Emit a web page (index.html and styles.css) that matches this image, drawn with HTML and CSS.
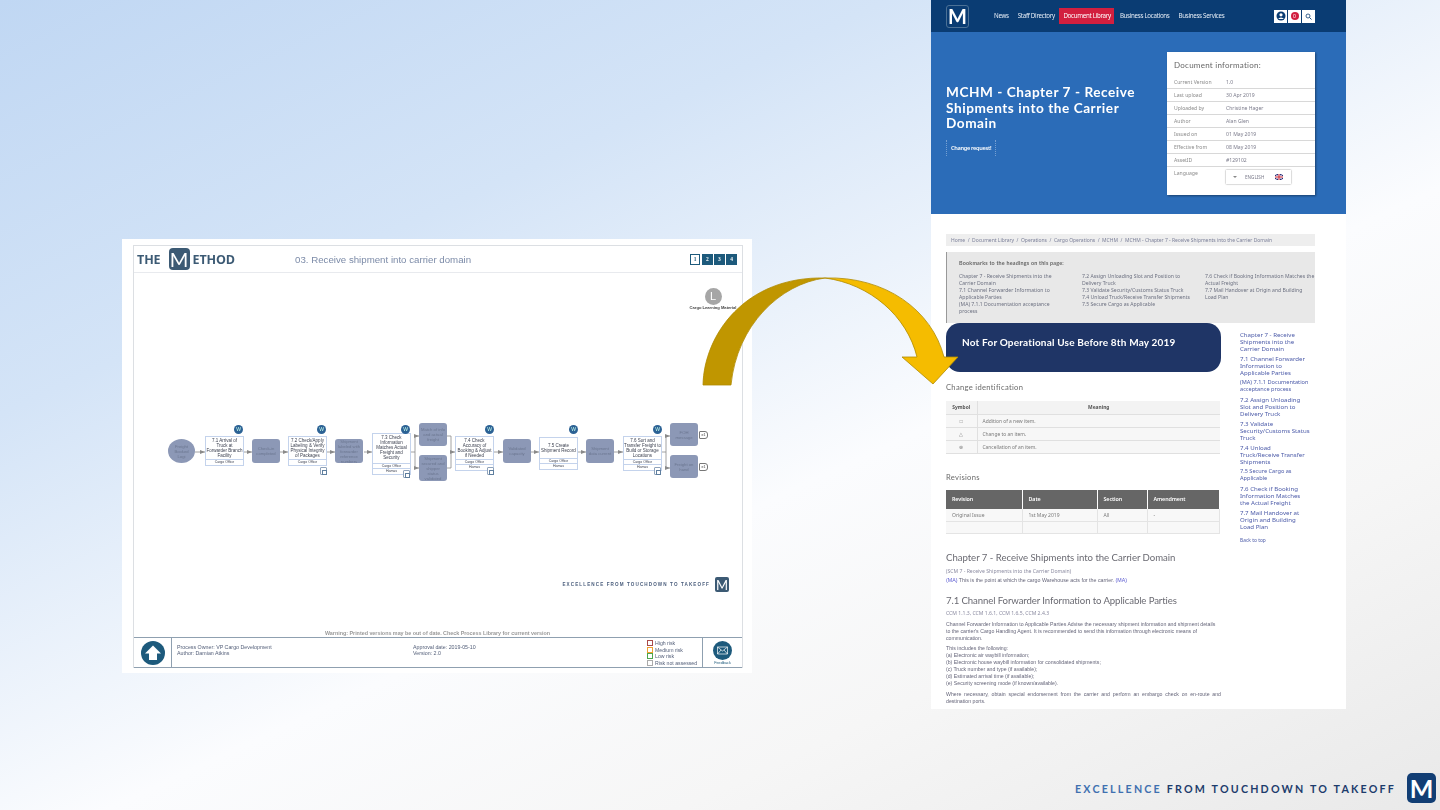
FILE: index.html
```html
<!DOCTYPE html>
<html lang="en">
<head>
<meta charset="utf-8">
<title>The Method - Document Library</title>
<link rel="stylesheet" href="styles.css">
</head>
<body>
<main class="slide">

<section class="method">
  <div class="frame">
    <header class="m-head">
      <span class="m-the">THE</span>
      <span class="m-logo">M</span>
      <span class="m-ethod">ETHOD</span>
      <span class="m-title">03. Receive shipment into carrier domain</span>
      <span class="m-pages"><b class="pg on">1</b><b class="pg">2</b><b class="pg">3</b><b class="pg">4</b></span>
    </header>
    <div class="m-canvas">
      <svg class="edges" width="610" height="364" viewBox="133 272 610 364">
        <g fill="none" stroke="#8a8a8a" stroke-width="0.8">
          <path d="M195 451H205M244 451H252M280 451H288M327 451H335M364 451H372M411 451H415M415 435H419M415 467H419M415 435V467M447 435H451M447 467H451M451 435V467M451 451H455M494 451H503M531 451H539M578 451H586M614 451H623M662 451H666M666 435V467M666 435H670M666 467H670"/>
        </g>
        <g fill="#8a8a8a">
          <path d="M205 451l-5-2v4zM252 451l-5-2v4zM288 451l-5-2v4zM335 451l-5-2v4zM372 451l-5-2v4zM419 435l-5-2v4zM419 467l-5-2v4zM455 451l-5-2v4zM503 451l-5-2v4zM539 451l-5-2v4zM586 451l-5-2v4zM623 451l-5-2v4zM670 435l-5-2v4zM670 467l-5-2v4z"/>
        </g>
      </svg>

      <div class="node oval s1">Freight Booked Logi</div>
      <div class="box b1"><p class="bt">7.1 Arrival of Truck at Forwarder Branch Facility</p><p class="br">Cargo Office</p></div>
      <div class="node s2">Check-in completed</div>
      <div class="box b2"><p class="bt">7.2 Check/Apply Labeling &amp; Verify Physical Integrity of Packages</p><p class="br">Cargo Office</p></div>
      <div class="node s3">Shipment labeled with forwarder reference numbers</div>
      <div class="box b3"><p class="bt">7.3 Check Information Matches Actual Freight and Security</p><p class="br">Cargo Office</p><p class="br">Hamas</p></div>
      <div class="node s4">Match of info and actual freight</div>
      <div class="node s5">Shipment secured and shipper status validated</div>
      <div class="box b4"><p class="bt">7.4 Check Accuracy of Booking &amp; Adjust if Needed</p><p class="br">Cargo Office</p><p class="br">Hamas</p></div>
      <div class="node s6">Validated capacity</div>
      <div class="box b5"><p class="bt mid">7.5 Create Shipment Record</p><p class="br">Cargo Office</p><p class="br">Hamas</p></div>
      <div class="node s7">Shipment data current</div>
      <div class="box b6"><p class="bt">7.6 Sort and Transfer Freight to Build or Storage Locations</p><p class="br">Cargo Office</p><p class="br">Hamas</p></div>
      <div class="node s8">FOH message</div>
      <div class="node s9">Freight on hand</div>

      <span class="w w1">W</span><span class="w w2">W</span><span class="w w3">W</span>
      <span class="w w4">W</span><span class="w w5">W</span><span class="w w6">W</span>

      <span class="doc d1"></span><span class="doc d2"></span><span class="doc d3"></span><span class="doc d4"></span>
      <span class="tag t1">e1</span><span class="tag t2">e1</span>

      <div class="learn"><span class="learn-dot">L</span><span class="learn-txt">Cargo Learning Material</span></div>
      <div class="m-tagline"><span>EXCELLENCE FROM TOUCHDOWN TO TAKEOFF</span><span class="m-logo small">M</span></div>
      <p class="warn">Warning: Printed versions may be out of date. Check Process Library for current version</p>
    </div>
    <footer class="m-foot">
      <div class="up-cell">
        <svg width="24" height="24" viewBox="0 0 24 24"><circle cx="12" cy="12" r="12" fill="#1d5a7c"/><path d="M12 4.5L20 12.5H16V19H8V12.5H4Z" fill="#fff"/></svg>
      </div>
      <div class="owner"><p>Process Owner: VP Cargo Development</p><p>Author: Damian Atkins</p></div>
      <div class="approve"><p>Approval date: 2019-05-10</p><p>Version: 2.0</p></div>
      <ul class="risk">
        <li><i class="rk high"></i>High risk</li>
        <li><i class="rk med"></i>Medium risk</li>
        <li><i class="rk low"></i>Low risk</li>
        <li><i class="rk none"></i>Risk not assessed</li>
      </ul>
      <div class="fb-cell">
        <svg width="19" height="19" viewBox="0 0 19 19"><circle cx="9.5" cy="9.5" r="9.5" fill="#1d5a7c"/><path d="M4.5 6h10v7h-10zM4.5 6l5 4 5-4M4.5 13l3.5-4M14.5 13l-3.5-4" fill="none" stroke="#fff" stroke-width="0.7"/></svg>
        <span>Feedback</span>
      </div>
    </footer>
  </div>
</section>

<section class="web">
  <nav class="nav">
    <span class="nav-logo">M</span>
    <ul class="nav-links">
      <li>News</li><li>Staff Directory</li><li class="active">Document Library</li><li>Business Locations</li><li>Business Services</li>
    </ul>
    <div class="nav-tools">
      <span class="tool"><svg width="10" height="10" viewBox="0 0 10 10"><circle cx="5" cy="5" r="4.5" fill="#0a3c73"/><circle cx="5" cy="3.8" r="1.6" fill="#fff"/><path d="M2.2 8a3 2.4 0 0 1 5.6 0z" fill="#fff"/></svg></span>
      <span class="tool"><span class="bell">0</span></span>
      <span class="tool"><svg width="7" height="7" viewBox="0 0 7 7"><circle cx="3" cy="3" r="2" fill="none" stroke="#0a3c73" stroke-width="0.8"/><path d="M4.5 4.5L6.5 6.5" stroke="#0a3c73" stroke-width="0.9"/></svg></span>
    </div>
  </nav>

  <div class="hero">
    <div class="hero-l">
      <h1>MCHM - Chapter 7 - Receive Shipments into the Carrier Domain</h1>
      <span class="change">Change request!</span>
    </div>
    <aside class="card">
      <h2>Document information:</h2>
      <dl class="rows">
        <div class="row"><dt>Current Version</dt><dd>1.0</dd></div>
        <div class="row"><dt>Last upload</dt><dd>30 Apr 2019</dd></div>
        <div class="row"><dt>Uploaded by</dt><dd>Christine Hager</dd></div>
        <div class="row"><dt>Author</dt><dd>Alan Glen</dd></div>
        <div class="row"><dt>Issued on</dt><dd>01 May 2019</dd></div>
        <div class="row"><dt>Effective from</dt><dd>08 May 2019</dd></div>
        <div class="row"><dt>AssetID</dt><dd>#129102</dd></div>
        <div class="row last"><dt>Language</dt><dd><span class="lang"><i class="caret"></i><span>ENGLISH</span><svg width="8" height="6" viewBox="0 0 8 6"><rect width="8" height="6" fill="#2a2f7a"/><path d="M0 0L8 6M8 0L0 6" stroke="#fff" stroke-width="1"/><path d="M4 0V6M0 3H8" stroke="#fff" stroke-width="1.8"/><path d="M4 0V6M0 3H8" stroke="#c8202f" stroke-width="1"/></svg></span></dd></div>
      </dl>
    </aside>
  </div>

  <div class="content">
    <div class="crumbs">Home &nbsp;/&nbsp; Document Library &nbsp;/&nbsp; Operations &nbsp;/&nbsp; Cargo Operations &nbsp;/&nbsp; MCHM &nbsp;/&nbsp; MCHM - Chapter 7 - Receive Shipments into the Carrier Domain</div>
    <div class="bookmarks">
      <h3>Bookmarks to the headings on this page:</h3>
      <div class="bm-cols">
        <p>Chapter 7 - Receive Shipments into the Carrier Domain<br>7.1 Channel Forwarder Information to Applicable Parties<br>(MA) 7.1.1 Documentation acceptance process</p>
        <p>7.2 Assign Unloading Slot and Position to Delivery Truck<br>7.3 Validate Security/Customs Status Truck<br>7.4 Unload Truck/Receive Transfer Shipments<br>7.5 Secure Cargo as Applicable</p>
        <p>7.6 Check if Booking Information Matches the Actual Freight<br>7.7 Mail Handover at Origin and Building Load Plan</p>
      </div>
    </div>
    <div class="body-grid">
      <article class="main">
        <div class="callout">Not For Operational Use Before 8th May 2019</div>
        <h4 class="sub first">Change identification</h4>
        <table class="t-change">
          <thead><tr><th class="c1">Symbol</th><th>Meaning</th></tr></thead>
          <tbody>
            <tr><td class="c1">□</td><td>Addition of a new item.</td></tr>
            <tr><td class="c1">△</td><td>Change to an item.</td></tr>
            <tr><td class="c1">⊗</td><td>Cancellation of an item.</td></tr>
          </tbody>
        </table>
        <h4 class="sub rev">Revisions</h4>
        <table class="t-rev">
          <thead><tr><th class="r1">Revision</th><th class="r2">Date</th><th class="r3">Section</th><th>Amendment</th></tr></thead>
          <tbody>
            <tr><td>Original Issue</td><td>1st May 2019</td><td>All</td><td>-</td></tr>
            <tr><td>&nbsp;</td><td></td><td></td><td></td></tr>
          </tbody>
        </table>
        <h5 class="ch">Chapter 7 - Receive Shipments into the Carrier Domain</h5>
        <p class="small-note">(SCM 7 - Receive Shipments into the Carrier Domain)</p>
        <p class="ma"><span class="mark">(MA)</span> This is the point at which the cargo Warehouse acts for the carrier. <span class="mark">(MA)</span></p>
        <h5 class="ch71">7.1 Channel Forwarder Information to Applicable Parties</h5>
        <p class="small-note">CCM 1.1.3, CCM 1.6.1, CCM 1.6.5, CCM 2.4.3</p>
        <p class="para">Channel Forwarder Information to Applicable Parties Advise the necessary shipment information and shipment details to the carrier's Cargo Handling Agent. It is recommended to send this information through electronic means of communication.</p>
        <p class="para list">This includes the following:<br>(a) Electronic air waybill information;<br>(b) Electronic house waybill information for consolidated shipments;<br>(c) Truck number and type (if available);<br>(d) Estimated arrival time (if available);<br>(e) Security screening mode (if known/available).</p>
        <p class="para just">Where necessary, obtain special endorsement from the carrier and perform an embargo check on en-route and destination ports.</p>
        <p class="para">The following security measures apply are:</p>
      </article>
      <aside class="toc">
        <a>Chapter 7 - Receive Shipments into the Carrier Domain</a>
        <a>7.1 Channel Forwarder Information to Applicable Parties</a>
        <a class="tight">(MA) 7.1.1 Documentation acceptance process</a>
        <a>7.2 Assign Unloading Slot and Position to Delivery Truck</a>
        <a>7.3 Validate Security/Customs Status Truck</a>
        <a>7.4 Unload Truck/Receive Transfer Shipments</a>
        <a class="tight">7.5 Secure Cargo as Applicable</a>
        <a>7.6 Check if Booking Information Matches the Actual Freight</a>
        <a>7.7 Mail Handover at Origin and Building Load Plan</a>
        <a class="back">Back to top</a>
      </aside>
    </div>
  </div>
</section>

<svg class="arrow" width="270" height="120" viewBox="700 272 270 120">
  <path d="M703 385C704 335 745 276 825 278C780 284 737 325 731 385Z" fill="#c09600" stroke="#b08a00" stroke-width="0.8"/>
  <path d="M825 278C885 276 932 310 944 357H958L933 384L902 357H917C907 316 870 284 825 278Z" fill="#f5bc00" stroke="#b08a00" stroke-width="0.8"/>
</svg>

<footer class="tagline">
  <p><span class="tg-a">EXCELLENCE</span> FROM TOUCHDOWN TO TAKEOFF</p>
  <span class="tg-logo">M</span>
</footer>

</main>
</body>
</html>
```
FILE: styles.css
```css
* { box-sizing: border-box; }
html, body { margin: 0; padding: 0; }
body { width: 1440px; height: 810px; overflow: hidden; font-family: "Liberation Sans", Arial, sans-serif; }
p, h1, h2, h3, h4, h5, ul, dl, dd { margin: 0; padding: 0; }
ul { list-style: none; }

.slide {
  position: relative; width: 1440px; height: 810px; overflow: hidden;
  background: linear-gradient(155deg, #c0d7f3 0%, #d4e4f7 28%, #fbfcfe 58%, #f6f6f6 76%, #e9e9e9 100%);
}

/* left window */
.method { position: absolute; left: 122px; top: 239px; width: 630px; height: 434px; background: #fff; padding: 6px 9px 5px 11px; filter: blur(.4px); }
.frame { height: 100%; display: flex; flex-direction: column; border: 1px solid #dcdfe3; border-bottom: 0; }
.m-head { height: 27px; display: flex; align-items: center; border-bottom: 1px solid #e8eaee; padding-left: 3px; flex: none; }
.m-the, .m-ethod { font-family: "Open Sans", sans-serif; font-weight: 700; font-size: 12.5px; color: #3c5a74; letter-spacing: -.1px; }
.m-logo { display: flex; align-items: center; justify-content: center; width: 21px; height: 22px; background: #3c5a74; border-radius: 4px; color: #fff; font-family: "Lato", sans-serif; font-size: 20px; margin: 0 4px 0 8px; }
.m-ethod { margin-right: 60px; margin-left: -1px; }
.m-title { font-size: 9.7px; color: #7c8ba8; flex: 1; }
.m-pages { display: flex; gap: 1.5px; margin-right: 5px; }
.pg { width: 10.7px; height: 11px; background: #1d5a7c; color: #fff; font-size: 5.5px; display: flex; align-items: center; justify-content: center; font-family: "Liberation Serif", serif; }
.pg.on { background: #fff; color: #1d5a7c; border: 1px solid #1d5a7c; }
.m-canvas { position: relative; flex: 1; }
.edges { position: absolute; left: -1px; top: 0; }

.node { position: absolute; width: 28px; height: 24px; background: #8c98b6; border-radius: 3px; color: #6b7690; font-size: 4.2px; line-height: 5px; text-align: center; display: flex; align-items: center; justify-content: center; padding: 0 1px; overflow: hidden; }
.oval { border-radius: 50%; width: 27px; padding: 0 3px; }
.s1 { left: 34px; top: 166px; } .s2 { left: 118px; top: 166px; } .s3 { left: 201px; top: 166px; }
.s4 { left: 285px; top: 150px; height: 23px; } .s5 { left: 285px; top: 182px; height: 26px; }
.s6 { left: 369px; top: 166px; } .s7 { left: 452px; top: 166px; }
.s8 { left: 536px; top: 150px; height: 23px; } .s9 { left: 536px; top: 182px; height: 23px; }

.box { position: absolute; width: 39px; background: #fff; border: 1px solid #c4d3ec; color: #3c4150; font-size: 4.5px; line-height: 5.1px; text-align: center; display: flex; flex-direction: column; }
.bt { padding: 1px 0 0; flex: 1; }
.bt.mid { display: flex; align-items: center; justify-content: center; }
.br { border-top: 1px solid #c4d3ec; font-size: 3.5px; line-height: 4.6px; }
.b1 { left: 71px; top: 163px; height: 30px; } .b2 { left: 154px; top: 163px; height: 30px; }
.b3 { left: 238px; top: 160px; height: 42px; } .b4 { left: 321px; top: 163px; height: 35px; }
.b5 { left: 405px; top: 164px; height: 33px; } .b6 { left: 489px; top: 163px; height: 35px; }

.w { position: absolute; width: 9px; height: 9px; border-radius: 50%; background: #2c6295; color: #cfe; font-size: 5px; line-height: 9px; text-align: center; }
.w1 { left: 100px; top: 152px; } .w2 { left: 183px; top: 152px; } .w3 { left: 267px; top: 152px; }
.w4 { left: 351px; top: 152px; } .w5 { left: 435px; top: 152px; } .w6 { left: 519px; top: 152px; }

.doc { position: absolute; width: 7px; height: 8px; background: #fff; border: 1px solid #8fa3bb; border-radius: 1px; }
.doc::after { content: ""; position: absolute; left: 1px; top: 1.5px; width: 3px; height: 3.5px; border: .8px solid #5f7f9f; }
.d1 { left: 186px; top: 194px; } .d2 { left: 269px; top: 197px; } .d3 { left: 353px; top: 194px; } .d4 { left: 520px; top: 194px; }
.tag { position: absolute; width: 9px; height: 8px; border: 1px solid #777; border-radius: 1px 3px 3px 1px; background: #fff; font-size: 3.5px; line-height: 6px; text-align: center; color: #333; }
.t1 { left: 565px; top: 158px; } .t2 { left: 565px; top: 190px; }

.learn { position: absolute; left: 556px; top: 15px; width: 46px; display: flex; flex-direction: column; align-items: center; }
.learn-dot { width: 17px; height: 17px; border-radius: 50%; background: #a6a6a6; color: #fff; font-size: 11px; line-height: 17px; text-align: center; }
.learn-txt { font-size: 4.1px; line-height: 5px; color: #444; white-space: nowrap; font-weight: 700; }

.m-tagline { position: absolute; right: 13px; top: 304px; display: flex; align-items: center; gap: 5px; }
.m-tagline span:first-child { font-family: "Liberation Sans", sans-serif; font-weight: 700; font-size: 4.6px; letter-spacing: 1.1px; color: #4a5d7c; white-space: nowrap; }
.m-logo.small { width: 14px; height: 15px; margin: 0; font-size: 13px; border-radius: 2px; }
.warn { position: absolute; left: 191px; bottom: 1px; font-size: 5.4px; color: #9a9a9a; font-weight: 700; white-space: nowrap; letter-spacing: -.02px; }

.m-foot { flex: none; height: 31px; display: flex; border-top: 1px solid #8fa0b0; border-bottom: 1px solid #8fa0b0; color: #55607a; font-size: 5.3px; line-height: 6.4px; }
.up-cell { width: 38px; display: flex; align-items: center; justify-content: center; border-right: 1px solid #8fa0b0; flex: none; }
.owner { width: 241px; padding: 6px 0 0 5px; flex: none; }
.approve { flex: 1; padding-top: 6px; }
.risk { width: 55px; padding-top: 2px; font-size: 5.2px; line-height: 6.5px; flex: none; }
.risk li { display: flex; align-items: center; gap: 2px; white-space: nowrap; }
.rk { width: 6px; height: 6px; border: 1px solid #aaa; flex: none; }
.rk.high { border-color: #a94a4a; } .rk.med { border-color: #f0a030; } .rk.low { border-color: #4ca64c; } .rk.none { border-color: #aaa; }
.fb-cell { width: 40px; border-left: 1px solid #8fa0b0; display: flex; flex-direction: column; align-items: center; padding-top: 3px; gap: 1px; flex: none; font-size: 3.8px; line-height: 5px; color: #1d5a7c; }

/* right window */
.web { position: absolute; left: 931px; top: 0; width: 415px; height: 709px; background: #fff; overflow: hidden; font-family: "Noto Sans", sans-serif; filter: blur(.35px); }
.nav { height: 32px; background: #0a3c73; display: flex; align-items: center; padding: 0 31px 0 15px; }
.nav-logo { width: 23px; height: 23px; border: 1px solid #4c7196; border-radius: 3px; color: #fff; font-family: "Lato", sans-serif; font-weight: 700; font-size: 20px; display: flex; align-items: center; justify-content: center; flex: none; }
.nav-links { display: flex; align-items: center; margin-left: 20.5px; color: #e6edf6; font-size: 6.2px; letter-spacing: -.3px; white-space: nowrap; }
.nav-links li { padding: 0 4.5px; line-height: 16px; }
.nav-links li.active { background: #d21f3f; color: #fff; padding: 0 4px; width: 55px; margin-right: 1px; }
.nav-tools { display: flex; gap: 1px; margin-left: auto; }
.tool { width: 13px; height: 13px; background: #fff; display: flex; align-items: center; justify-content: center; }
.bell { width: 8px; height: 8px; border-radius: 50%; background: #d21f3f; color: #fff; font-size: 5px; line-height: 8px; text-align: center; }

.hero { height: 182px; background: #2b6cb8; display: flex; padding: 20px 31px 0 15px; justify-content: space-between; }
.hero-l { width: 200px; padding-top: 33px; color: #fff; }
h1 { font-family: "Lato", sans-serif; font-weight: 700; font-size: 13.6px; line-height: 15.5px; letter-spacing: .55px; }
.change { display: inline-block; margin-top: 8px; padding: 3px 4px; font-size: 5.6px; font-weight: 600; letter-spacing: -.3px; border: 1px dotted rgba(255,255,255,.35); border-width: 0 1px; line-height: 10px; }
.card { width: 148px; height: 143px; background: #fff; box-shadow: 1px 1px 2px rgba(0,0,0,.4); padding: 8px 0 0; color: #777; }
.card h2 { font-family: "Lato", sans-serif; font-size: 8px; font-weight: 400; letter-spacing: .25px; color: #666; padding-left: 7px; line-height: 11px; margin-bottom: 5px; }
.row { display: flex; height: 13px; border-bottom: 1px solid #d8d8d8; font-size: 5.1px; line-height: 12px; padding-left: 7px; }
.row dt { width: 52px; color: #8a8a8a; }
.row dd { color: #7c7c8c; }
.row.last { border-bottom: 0; }
.lang { display: flex; align-items: center; width: 65px; height: 14px; margin-top: 3px; box-shadow: 0 0 1.5px rgba(0,0,0,.5); padding: 0 8px 0 7px; gap: 8px; font-size: 4.6px; }
.lang span { flex: 1; }
.caret { width: 0; height: 0; border: 2px solid transparent; border-top-color: #888; border-bottom: 0; }

.content { padding: 20px 31px 0 15px; }
.crumbs { height: 12px; background: #eeeeee; font-size: 5px; line-height: 12px; color: #7c809a; padding-left: 5px; white-space: nowrap; letter-spacing: -.02px; }
.bookmarks { height: 71px; margin-top: 6px; background: #e8e8e8; border-left: 1px solid #999; padding: 7px 0 0 12px; color: #6c7080; }
.bookmarks h3 { font-family: "Lato", sans-serif; font-size: 5.4px; font-weight: 700; letter-spacing: .2px; color: #666; line-height: 8px; margin-bottom: 6px; }
.bm-cols { display: grid; grid-template-columns: 112px 112px 1fr; column-gap: 11px; font-size: 5.1px; line-height: 6.9px; }
.bm-cols p:first-child { padding-right: 12px; }

.body-grid { display: flex; gap: 19px; }
.main { width: 275px; flex: none; }
.callout { height: 49px; background: #1f3566; border-radius: 14px; color: #fff; font-family: "Lato", sans-serif; font-size: 10px; font-weight: 700; letter-spacing: .18px; padding: 13px 0 0 16px; line-height: 13px; }
.sub { font-family: "Lato", sans-serif; font-weight: 400; font-size: 7.6px; letter-spacing: .3px; color: #6a6a6a; line-height: 10px; }
.sub.first { margin-top: 10px; margin-bottom: 9px; }
.sub.rev { margin-top: 18px; margin-bottom: 8px; }
table { border-collapse: collapse; width: 274px; table-layout: fixed; }
.t-change { font-size: 4.9px; color: #7a7a7a; background: #f7f7f7; }
.t-change th { height: 13px; font-size: 4.9px; color: #555; background: #f3f3f3; font-weight: 700; border-bottom: 1px solid #e0e0e0; padding: 0; }
.t-change td { height: 13px; padding: 0 0 0 5px; border-bottom: 1px solid #e0e0e0; }
.t-change .c1 { width: 31px; border-right: 1px solid #e0e0e0; text-align: center; padding: 0; }
.t-rev { font-size: 5px; color: #7a7a7a; background: #f8f8f8; }
.t-rev th { height: 19px; background: #666; color: #fff; font-size: 5.4px; font-weight: 600; letter-spacing: -.1px; text-align: left; padding-left: 6px; border-right: 1px solid #fff; }
.t-rev td { height: 12.5px; padding-left: 6px; border-bottom: 1px solid #e4e4e4; border-right: 1px solid #e4e4e4; }
.r1 { width: 76px; } .r2 { width: 75px; } .r3 { width: 50px; }
.ch { font-family: "Lato", sans-serif; font-weight: 400; font-size: 9.6px; letter-spacing: -.03px; color: #6a6a72; line-height: 12px; margin-top: 18px; white-space: nowrap; }
.small-note { font-size: 5.1px; color: #8a8aa0; line-height: 7px; margin-top: 4px; }
.ma { font-family: "Liberation Sans", sans-serif; font-size: 5.3px; color: #66667a; line-height: 7px; margin-top: 2px; }
.mark { color: #5a5ad0; }
.ch71 { font-family: "Lato", sans-serif; font-weight: 400; font-size: 9.6px; letter-spacing: -.1px; color: #6a6a72; line-height: 13px; margin-top: 10px; white-space: nowrap; }
.para { font-family: "Liberation Sans", sans-serif; font-size: 5.2px; color: #66667a; line-height: 7px; margin-top: 4px; }
.para.list { margin-top: 3px; }
.para.just { text-align: justify; }
.ch71 + .small-note { margin-top: 3px; }

.toc { width: 71px; flex: none; padding-top: 8px; display: flex; flex-direction: column; gap: 3px; color: #4b5aa8; font-size: 6.1px; line-height: 7px; }
.toc a.tight { font-size: 5.6px; }
.toc a.back { font-size: 4.9px; margin-top: 4px; }
/* overlays */
.arrow { position: absolute; left: 700px; top: 272px; }
.tagline { position: absolute; left: 1075px; top: 773px; width: 361px; height: 30px; display: flex; align-items: center; justify-content: space-between; }
.tagline p { font-family: "Lato", sans-serif; font-weight: 700; font-size: 10.7px; letter-spacing: 2.2px; color: #1d3c6c; white-space: nowrap; margin-bottom: 0; }
.tg-a { color: #3f70b0; }
.tg-logo { width: 29px; height: 30px; background: #123e74; border-radius: 5px; color: #fff; font-family: "Lato", sans-serif; font-weight: 700; font-size: 25px; display: flex; align-items: center; justify-content: center; }
```
